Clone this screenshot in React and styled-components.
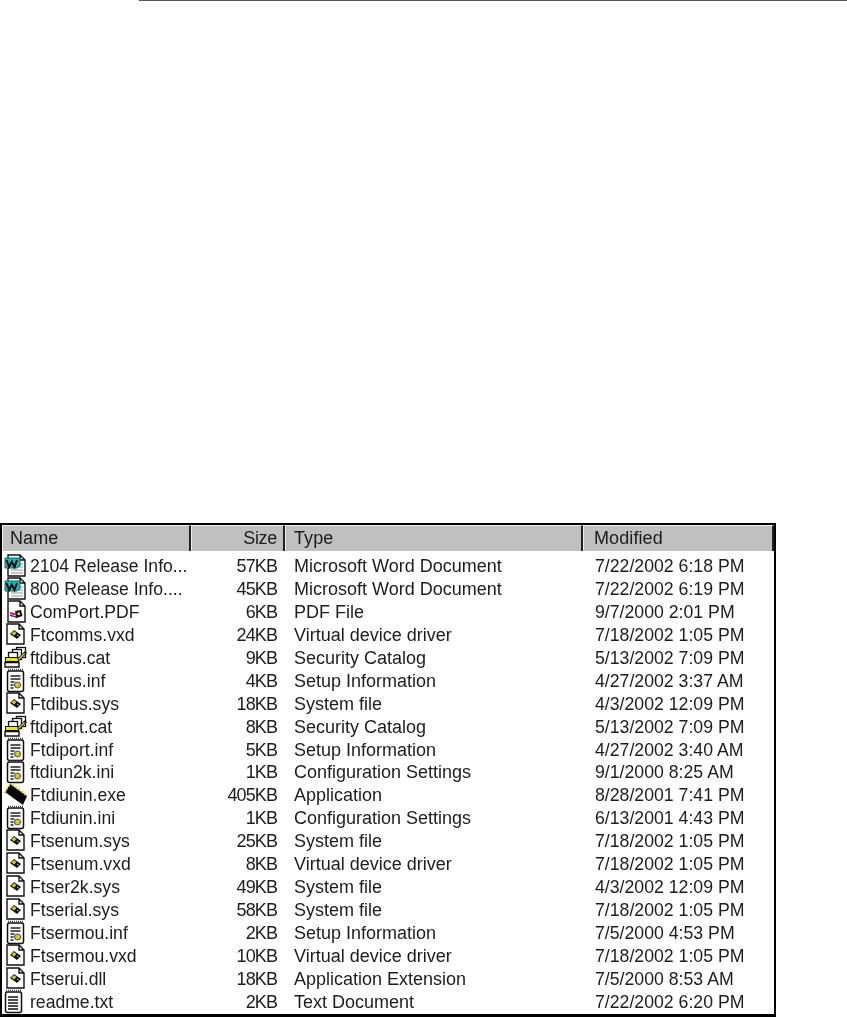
import React from "react";
import styled, { createGlobalStyle } from "styled-components";

const Global = createGlobalStyle`
  html, body { margin: 0; padding: 0; background: #fff; }
  body { font-family: "Liberation Sans", Arial, sans-serif; color: #1c1c1c; }
`;

const Page = styled.div`
  width: 847px;
  height: 1017px;
  overflow: hidden;
  background: #fff;
`;

const TopRule = styled.div`
  height: 1px;
  margin-left: 139px;
  background: #555;
  margin-bottom: 522px;
`;

const Frame = styled.div`
  width: 776px;
  box-sizing: border-box;
  border: 2px solid #000;
  border-bottom-width: 3px;
  height: 494px;
  overflow: hidden;
`;

const cols = "189px 94px 298px 1fr";

const HeaderRow = styled.div`
  display: grid;
  grid-template-columns: ${cols};
  height: 26px;
  border-bottom: 2px solid #111;
  box-sizing: border-box;
`;

const HeaderCell = styled.div`
  background: #c0c0c0;
  border-top: 1px solid #eee;
  border-left: 1px solid #eee;
  border-right: 2px solid #222;
  box-sizing: border-box;
  font-size: 18px;
  letter-spacing: ${(p) => (p.$right ? "-0.3px" : "0.1px")};
  line-height: 25px;
  padding: 0 ${(p) => (p.$right ? "6px" : "0")} 0 ${(p) => (p.$right ? "0" : `${p.$pad}px`)};
  text-align: ${(p) => (p.$right ? "right" : "left")};
  white-space: nowrap;
  filter: blur(0.3px);
`;

const Rows = styled.div`
  padding-top: 4px;
  filter: blur(0.3px);
`;

const Row = styled.div`
  display: grid;
  grid-template-columns: ${cols};
  height: 22.95px;
  align-items: center;
  white-space: nowrap;
`;

const NameCell = styled.div`
  display: flex;
  align-items: center;
  gap: 5px;
  height: 100%;
  font-size: 17.6px;
`;

const IconSlot = styled.svg`
  width: 23px;
  height: 23px;
  flex: none;
  overflow: visible;
`;

const SizeCell = styled.div`
  text-align: right;
  padding-right: 8px;
  font-size: 18px;
  letter-spacing: -0.9px;
`;

const TypeCell = styled.div`
  padding-left: 9px;
  font-size: 18px;
`;

const DateCell = styled.div`
  padding-left: 12px;
  font-size: 17.7px;
`;

const Sheet = ({ x = 5, y = 0, w = 17, h = 20 }) => (
  <path
    d={`M${x} ${y}h${w - 5}l5 5v${h - 5}h-${w}z M${x + w - 5} ${y}v5h5`}
    fill="#fff"
    stroke="#111"
    strokeWidth="1.4"
  />
);

const Gear = ({ x, y }) => (
  <g>
    <path d={`M${x} ${y + 4}l4 -4 7 5 -4 4z`} fill="#111" />
    <path d={`M${x + 1.5} ${y + 3.5}l2.500 -2.500 2.500 2 -2.500 2.500z`} fill="#d6c81e" />
    <path d={`M${x + 7} ${y + 5}l1.500 1`} stroke="#ddd" />
  </g>
);

const Notepad = ({ x = 5, children }) => (
  <>
    <rect x={x + 0.5} y="1" width="16" height="20.500" rx="2" fill="#fff" stroke="#111" strokeWidth="1.5" />
    <path d={`M${x + 1} 0h15`} stroke="#444" strokeDasharray="1 1" strokeWidth="2.500" />
    {children}
  </>
);

const WordIcon = () => (
  <IconSlot viewBox="0 0 23 23">
    <Sheet x={6} y={0} w={17} h={21} />
    <path d="M17 9h4M17 12h4M9 15h12M9 18h12" stroke="#b5b5b5" strokeWidth="1.3" />
    <path d="M3 3h15v8l-3 2h-12z" fill="#16b8b8" stroke="#0b6d6d" />
    <path d="M4.500 5l2.500 7 2.800-5.500 2.700 5.500 2.500-7" fill="none" stroke="#000" strokeWidth="1.900" />
  </IconSlot>
);

const PdfIcon = () => (
  <IconSlot viewBox="0 0 23 23">
    <Sheet x={6} y={0} w={17} h={21} />
    <path d="M8 11l6 1.500v2l-6-1.500z" fill="#d41c2c" />
    <path d="M8 13.500l7 2v1.500l-7-2z" fill="#2030c4" />
    <path d="M13 10l6-1 1.500 6-6 2z" fill="#111" />
    <rect x="15.500" y="11.500" width="2.500" height="2.500" fill="#e4cc50" />
  </IconSlot>
);

const DriverIcon = () => (
  <IconSlot viewBox="0 0 23 23">
    <Sheet x={5} y={0} w={17} h={20} />
    <Gear x={8} y={6} />
  </IconSlot>
);

const CatIcon = () => (
  <IconSlot viewBox="0 0 23 23">
    <rect x="14.500" y="0.500" width="9" height="10" fill="#fff" stroke="#111" strokeWidth="1.300" />
    <rect x="10.500" y="2.500" width="9" height="10" fill="#fff" stroke="#111" strokeWidth="1.300" />
    <rect x="6.500" y="5.500" width="9" height="7" fill="#fff" stroke="#111" strokeWidth="1.300" />
    <rect x="3.500" y="10.500" width="13" height="4" fill="#ece41a" stroke="#111" />
    <path d="M3 15.500h14v4.500h-14z" fill="#fff" stroke="#111" strokeWidth="1.400" />
    <path d="M16 13l8-8" stroke="#111" strokeWidth="2.800" />
    <path d="M16.500 12.500l6-6" stroke="#ece41a" strokeWidth="1.100" />
  </IconSlot>
);

const InfIcon = () => (
  <IconSlot viewBox="0 0 23 23">
    <Notepad>
      <path d="M8.500 6h10M8.500 9h10M8.500 12h4M8.500 15h3M8.500 18h3" stroke="#222" strokeWidth="1.300" />
      <circle cx="15.500" cy="15" r="3" fill="#dccb18" stroke="#444" />
    </Notepad>
  </IconSlot>
);

const ExeIcon = () => (
  <IconSlot viewBox="0 0 23 23">
    <path d="M3 8l5-8 17 12-4 9z" fill="#050505" />
    <path
      d="M10 0l2 1.500M13 2.500l2 1.500M16 4.500l2 1.500M19 7l2 1.500M22 9.500l2 1.500"
      stroke="#e6d616"
      strokeWidth="1.600"
    />
    <path d="M2.500 9l1.500-2M4 6l1.500-2M6 3l1.500-2" stroke="#e6d616" strokeWidth="1.400" />
  </IconSlot>
);

const TxtIcon = () => (
  <IconSlot viewBox="0 0 23 23">
    <Notepad x={3}>
      <path d="M6 6h10M6 9h10M6 12h10M6 15h10M6 18h10" stroke="#111" strokeWidth="1.300" />
    </Notepad>
  </IconSlot>
);

const icons = {
  word: WordIcon,
  pdf: PdfIcon,
  drv: DriverIcon,
  cat: CatIcon,
  inf: InfIcon,
  exe: ExeIcon,
  txt: TxtIcon,
};

const files = [
  ["word", "2104 Release Info...", "57KB", "Microsoft Word Document", "7/22/2002 6:18 PM"],
  ["word", "800 Release Info....", "45KB", "Microsoft Word Document", "7/22/2002 6:19 PM"],
  ["pdf", "ComPort.PDF", "6KB", "PDF File", "9/7/2000 2:01 PM"],
  ["drv", "Ftcomms.vxd", "24KB", "Virtual device driver", "7/18/2002 1:05 PM"],
  ["cat", "ftdibus.cat", "9KB", "Security Catalog", "5/13/2002 7:09 PM"],
  ["inf", "ftdibus.inf", "4KB", "Setup Information", "4/27/2002 3:37 AM"],
  ["drv", "Ftdibus.sys", "18KB", "System file", "4/3/2002 12:09 PM"],
  ["cat", "ftdiport.cat", "8KB", "Security Catalog", "5/13/2002 7:09 PM"],
  ["inf", "Ftdiport.inf", "5KB", "Setup Information", "4/27/2002 3:40 AM"],
  ["inf", "ftdiun2k.ini", "1KB", "Configuration Settings", "9/1/2000 8:25 AM"],
  ["exe", "Ftdiunin.exe", "405KB", "Application", "8/28/2001 7:41 PM"],
  ["inf", "Ftdiunin.ini", "1KB", "Configuration Settings", "6/13/2001 4:43 PM"],
  ["drv", "Ftsenum.sys", "25KB", "System file", "7/18/2002 1:05 PM"],
  ["drv", "Ftsenum.vxd", "8KB", "Virtual device driver", "7/18/2002 1:05 PM"],
  ["drv", "Ftser2k.sys", "49KB", "System file", "4/3/2002 12:09 PM"],
  ["drv", "Ftserial.sys", "58KB", "System file", "7/18/2002 1:05 PM"],
  ["inf", "Ftsermou.inf", "2KB", "Setup Information", "7/5/2000 4:53 PM"],
  ["drv", "Ftsermou.vxd", "10KB", "Virtual device driver", "7/18/2002 1:05 PM"],
  ["drv", "Ftserui.dll", "18KB", "Application Extension", "7/5/2000 8:53 AM"],
  ["txt", "readme.txt", "2KB", "Text Document", "7/22/2002 6:20 PM"],
];

export default function App() {
  return (
    <Page>
      <Global />
      <TopRule />
      <Frame>
        <HeaderRow>
          <HeaderCell $pad={7}>Name</HeaderCell>
          <HeaderCell $right>Size</HeaderCell>
          <HeaderCell $pad={8}>Type</HeaderCell>
          <HeaderCell $pad={10}>Modified</HeaderCell>
        </HeaderRow>
        <Rows>
          {files.map(([kind, name, size, type, date]) => {
            const Icon = icons[kind];
            return (
              <Row key={name}>
                <NameCell>
                  <Icon />
                  <span>{name}</span>
                </NameCell>
                <SizeCell>{size}</SizeCell>
                <TypeCell>{type}</TypeCell>
                <DateCell>{date}</DateCell>
              </Row>
            );
          })}
        </Rows>
      </Frame>
    </Page>
  );
}
